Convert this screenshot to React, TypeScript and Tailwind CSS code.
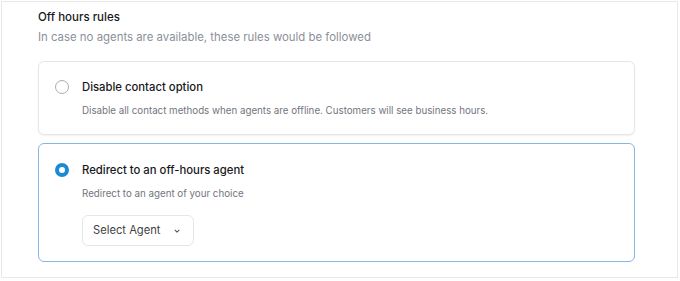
import React from "react";

function Chevron() {
  return (
    <svg width="8" height="8" viewBox="0 0 10 10" fill="none" className="text-[#4b5563]">
      <path d="M2.5 4l2.5 2.5L7.5 4" stroke="currentColor" strokeWidth="1.3" strokeLinecap="round" strokeLinejoin="round" />
    </svg>
  );
}

export default function App() {
  return (
    <div className="w-[680px] h-[281px] bg-white p-px font-['Inter',sans-serif]">
      <div className="w-[677px] h-[277px] border border-[#e8e8e8] pl-[36px] pt-[5px]">
        <div className="text-[11.5px] leading-[20px] font-medium text-[#18181b]">Off hours rules</div>
        <div className="text-[11.4px] leading-[20px] text-[#8b909a]">
          In case no agents are available, these rules would be followed
        </div>

        <div className="mt-[14px] w-[597px] rounded-md border border-[#e6e6e6] bg-white shadow-[0_1px_2px_rgba(0,0,0,0.06)] pl-[16px] pt-[15px] pb-[13px]">
          <div className="flex items-center gap-[13px]">
            <div className="w-[14px] h-[14px] rounded-full border-[1.5px] border-[#a8adb5] bg-white shrink-0" />
            <div className="text-[11.3px] leading-[20px] font-medium text-[#18181b]">Disable contact option</div>
          </div>
          <div className="mt-[4px] pl-[27px] text-[9.75px] leading-[20px] text-[#71757e]">
            Disable all contact methods when agents are offline. Customers will see business hours.
          </div>
        </div>

        <div className="mt-[8px] w-[597px] rounded-md border border-[#86b7e3] bg-white pl-[16px] pt-[16px] pb-[15px]">
          <div className="flex items-center gap-[13px]">
            <div className="w-[14px] h-[14px] rounded-full border-[4px] border-[#1a8ad4] bg-white shrink-0" />
            <div className="text-[11.3px] leading-[20px] font-medium text-[#18181b]">Redirect to an off-hours agent</div>
          </div>
          <div className="mt-[4px] pl-[27px] text-[9.75px] leading-[20px] text-[#71757e]">
            Redirect to an agent of your choice
          </div>
          <div className="ml-[27px] mt-[11px] w-[112px] h-[31px] rounded-md border border-[#e6e6e6] flex items-center justify-between pl-[10px] pr-[12px]">
            <span className="text-[11.2px] text-[#3f3f46]">Select Agent</span>
            <Chevron />
          </div>
        </div>
      </div>
    </div>
  );
}
